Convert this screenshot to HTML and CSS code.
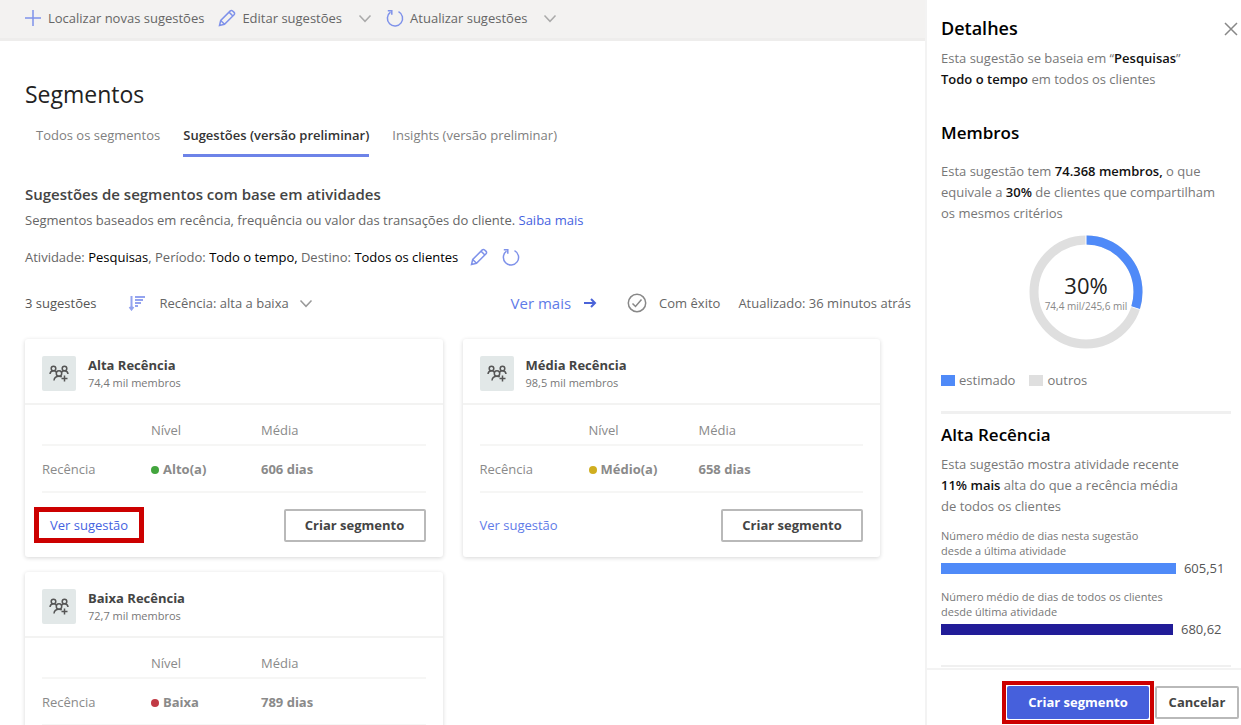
FILE: index.html
```html
<!DOCTYPE html>
<html lang="pt-BR">
<head>
<meta charset="utf-8">
<title>Segmentos</title>
<link rel="stylesheet" href="styles.css">
</head>
<body>
<svg class="defs" aria-hidden="true">
  <symbol id="pencil" viewBox="0 0 18 18"><path d="M1.500 16.500l1.200-5L12.300 1.900a1.600 1.600 0 0 1 2.300 0l1.500 1.500a1.600 1.600 0 0 1 0 2.300L6.500 15.300zM2.700 11.500l3.800 3.800M11.300 3.400l3.300 3.300"/></symbol>
  <symbol id="refresh" viewBox="0 0 18 18"><path d="M12.500 2.600a7.600 7.600 0 1 1-8 .6M1.800 1.800h4v4"/></symbol>
  <symbol id="chevron" viewBox="0 0 14 9"><path d="M1.500 1.500L7 7.300l5.500-5.800"/></symbol>
  <symbol id="people" viewBox="0 0 20 20"><circle cx="4.500" cy="4.500" r="2.300"/><circle cx="15.500" cy="4.500" r="2.300"/><circle cx="10" cy="9.500" r="2.700"/><path d="M1 10c.2-2 1.500-3.300 3.500-3.300 1.400 0 2.300.6 3 1.600M19 10c-.2-2-1.500-3.300-3.500-3.300-1.400 0-2.300.6-3 1.600M5 16.500c.2-2.700 2-4.300 5-4.300 1 0 2 .2 2.700.7M15.500 11.500v6M12.500 14.500h6"/></symbol>
</svg>
<div class="app">
  <main class="main">
    <div class="toolbar">
      <button class="command"><svg class="icon" viewBox="0 0 18 18"><path d="M9 1v16M1 9h16"/></svg>Localizar novas sugestões</button>
      <button class="command"><svg class="icon"><use href="#pencil"/></svg>Editar sugestões<svg class="chevron"><use href="#chevron"/></svg></button>
      <button class="command"><svg class="icon"><use href="#refresh"/></svg>Atualizar sugestões<svg class="chevron"><use href="#chevron"/></svg></button>
    </div>
    <div class="content">
      <h1 class="title">Segmentos</h1>
      <nav class="tabs">
        <a class="tab" href="#">Todos os segmentos</a>
        <a class="tab tab-active" href="#">Sugestões (versão preliminar)</a>
        <a class="tab" href="#">Insights (versão preliminar)</a>
      </nav>
      <h2 class="subtitle">Sugestões de segmentos com base em atividades</h2>
      <p class="description">Segmentos baseados em recência, frequência ou valor das transações do cliente. <a class="link-strong" href="#">Saiba mais</a></p>
      <div class="criteria">
        <span>Atividade: <span class="ink">Pesquisas</span>, Período: <span class="ink">Todo o tempo,</span> Destino: <span class="ink">Todos os clientes</span></span>
        <button class="icon-button" aria-label="Editar"><svg class="icon"><use href="#pencil"/></svg></button>
        <button class="icon-button" aria-label="Atualizar"><svg class="icon"><use href="#refresh"/></svg></button>
      </div>
      <div class="results">
        <span class="count">3 sugestões</span>
        <button class="sort"><svg class="sort-icon" viewBox="0 0 18 16"><path d="M3.500 1v13M1.500 12l2 2.500 2-2.500M7 2h10M7 5h8M7 8h6M7 11h3"/></svg>Recência: alta a baixa<svg class="chevron"><use href="#chevron"/></svg></button>
        <a class="more" href="#">Ver mais<svg class="arrow" viewBox="0 0 14 12"><path d="M1 6h11M8 2l4 4-4 4"/></svg></a>
        <span class="status"><svg class="check" viewBox="0 0 20 20"><circle cx="10" cy="10" r="8.700"/><path d="M5.500 10.500l3 3 6-7"/></svg>Com êxito</span>
        <span class="updated">Atualizado: 36 minutos atrás</span>
      </div>
      <div class="cards">
        <article class="card">
          <header class="card-head"><span class="avatar"><svg class="people"><use href="#people"/></svg></span><div><h3 class="card-title">Alta Recência</h3><p class="card-members">74,4 mil membros</p></div></header>
          <div class="card-body">
            <table class="levels">
              <thead><tr><td></td><th>Nível</th><th>Média</th></tr></thead>
              <tbody><tr><td>Recência</td><td class="value"><span class="dot dot-green"></span>Alto(a)</td><td class="value">606 dias</td></tr></tbody>
            </table>
            <div class="card-actions"><a class="view view-marked" href="#">Ver sugestão</a><button class="button">Criar segmento</button></div>
          </div>
        </article>
        <article class="card">
          <header class="card-head"><span class="avatar"><svg class="people"><use href="#people"/></svg></span><div><h3 class="card-title">Média Recência</h3><p class="card-members">98,5 mil membros</p></div></header>
          <div class="card-body">
            <table class="levels">
              <thead><tr><td></td><th>Nível</th><th>Média</th></tr></thead>
              <tbody><tr><td>Recência</td><td class="value"><span class="dot dot-yellow"></span>Médio(a)</td><td class="value">658 dias</td></tr></tbody>
            </table>
            <div class="card-actions"><a class="view" href="#">Ver sugestão</a><button class="button">Criar segmento</button></div>
          </div>
        </article>
        <article class="card">
          <header class="card-head"><span class="avatar"><svg class="people"><use href="#people"/></svg></span><div><h3 class="card-title">Baixa Recência</h3><p class="card-members">72,7 mil membros</p></div></header>
          <div class="card-body">
            <table class="levels">
              <thead><tr><td></td><th>Nível</th><th>Média</th></tr></thead>
              <tbody><tr><td>Recência</td><td class="value"><span class="dot dot-red"></span>Baixa</td><td class="value">789 dias</td></tr></tbody>
            </table>
          </div>
        </article>
      </div>
    </div>
  </main>
  <aside class="panel">
    <div class="panel-body">
      <header class="panel-head"><h2 class="panel-title">Detalhes</h2><button class="close" aria-label="Fechar"><svg class="close-icon" viewBox="0 0 14 14"><path d="M1 1l12 12M13 1L1 13"/></svg></button></header>
      <p class="panel-text">Esta sugestão se baseia em “<b>Pesquisas</b>”<br><b>Todo o tempo</b> em todos os clientes</p>
      <h3 class="panel-heading members-heading">Membros</h3>
      <p class="panel-text members-text">Esta sugestão tem <b>74.368 membros,</b> o que<br>equivale a <b>30%</b> de clientes que compartilham<br>os mesmos critérios</p>
      <div class="donut">
        <svg class="donut-chart" viewBox="0 0 114 114" aria-hidden="true">
          <circle class="ring" cx="57" cy="57" r="52"/>
          <circle class="ring ring-value" cx="57" cy="57" r="52" pathLength="100" stroke-dasharray="30 70" transform="rotate(-90 57 57)"/>
          <path class="ring-gap" d="M57 0v11M100.700 71.200l11.500 3.700"/>
        </svg>
        <span class="donut-value">30%</span>
        <span class="donut-label">74,4 mil/245,6 mil</span>
      </div>
      <div class="legend"><span class="legend-item"><i class="swatch swatch-blue"></i>estimado</span><span class="legend-item"><i class="swatch"></i>outros</span></div>
      <section class="recency">
        <h3 class="panel-heading">Alta Recência</h3>
        <p class="panel-text recency-text">Esta sugestão mostra atividade recente<br><b>11% mais</b> alta do que a recência média<br>de todos os clientes</p>
        <p class="bar-label">Número médio de dias nesta sugestão<br>desde a última atividade</p>
        <div class="bar-row"><span class="bar" style="width:81%"></span><span>605,51</span></div>
        <p class="bar-label">Número médio de dias de todos os clientes<br>desde última atividade</p>
        <div class="bar-row"><span class="bar bar-navy" style="width:80%"></span><span>680,62</span></div>
      </section>
    </div>
    <footer class="panel-foot"><span class="marked"><button class="button button-primary">Criar segmento</button></span><button class="button button-small">Cancelar</button></footer>
  </aside>
</div>
</body>
</html>
```
FILE: styles.css
```css
* { box-sizing: border-box; }
body { margin: 0; font: 13px/20px "Open Sans", "Noto Sans", sans-serif; color: #666; background: #fff; }
h1, h2, h3, p { margin: 0; font-weight: 600; }
p { font-weight: 400; }
a { text-decoration: none; }
button { font: inherit; color: inherit; background: none; border: 0; padding: 0; white-space: nowrap; }
svg { fill: none; flex: none; }
.defs { position: absolute; width: 0; height: 0; }

.app { display: grid; grid-template-columns: minmax(0, 1fr) 316px; height: 100vh; overflow: hidden; }
.main { min-width: 0; overflow: hidden; }

.toolbar { display: flex; gap: 14px; height: 41px; padding: 0 24px 2px; background: #f3f2f1; border-bottom: 3px solid #eeedec; }
.command { display: flex; align-items: center; gap: 6px; }
.icon { width: 18px; height: 18px; stroke: #7f92ea; stroke-width: 1.5; }
.chevron { width: 14px; height: 9px; margin-left: 10px; stroke: #aaa; stroke-width: 1.5; }

.content { padding: 36px 14px 0 25px; }
.title { font-size: 23px; line-height: 34px; font-weight: 500; color: #222; }
.tabs { display: flex; gap: 23px; padding-left: 11px; margin-top: 14px; }
.tab { padding-bottom: 9px; color: #808080; border-bottom: 3px solid transparent; white-space: nowrap; }
.tab-active { color: #333; font-weight: 600; border-color: #6d83e8; }
.subtitle { margin-top: 26px; font-size: 15px; line-height: 22px; color: #444; }
.description { margin-top: 5px; }
.link-strong { color: #4562df; }
.criteria { display: flex; align-items: center; gap: 12px; margin-top: 17px; white-space: nowrap; }
.ink { color: #000; }
.icon-button { display: flex; margin-right: 2px; }
.results { display: flex; align-items: center; margin-top: 26px; white-space: nowrap; }
.count { color: #555; font-weight: 500; }
.sort { display: flex; align-items: center; margin-left: 32px; }
.sort-icon { width: 18px; height: 16px; margin-right: 13px; stroke: #93a3ef; stroke-width: 2; }
.sort .chevron { stroke: #999; }
.more { display: flex; align-items: center; gap: 12px; margin-left: auto; font-size: 15px; color: #5f7be8; }
.arrow { width: 14px; height: 12px; stroke: #4a63d8; stroke-width: 2; }
.status { display: flex; align-items: center; gap: 12px; margin-left: 30px; font-weight: 500; }
.check { width: 20px; height: 20px; stroke: #888; stroke-width: 1.5; }
.updated { margin-left: 18px; }

.cards { display: grid; grid-template-columns: 1fr 1fr; gap: 15px 20px; margin: 26px 31px 0 0; align-items: start; }
.card { border-radius: 3px; box-shadow: 0 1px 4px rgba(0, 0, 0, .16); }
.card-head { display: flex; gap: 12px; height: 66px; padding: 17px 17px 0; border-bottom: 2px solid #f3f3f2; }
.avatar { display: grid; place-items: center; width: 34px; height: 35px; background: #e2e8e8; border-radius: 2px; }
.people { width: 20px; height: 20px; stroke: #555; stroke-width: 1.5; }
.card-title { font-size: 13px; line-height: 18px; font-weight: 700; color: #444; }
.card-members { font-size: 11px; line-height: 18px; color: #777; }
.card-body { padding: 15px 17px 14px; }
.levels { width: 100%; border-collapse: collapse; table-layout: fixed; color: #8a8a8a; }
.levels td, .levels th { padding: 0; text-align: left; font-weight: 400; }
.levels td:nth-child(1) { width: 109px; }
.levels th:nth-child(2) { width: 110px; }
.levels tr { border-bottom: 2px solid #f6f6f5; }
.levels thead tr { height: 25px; }
.levels thead td, .levels thead th { vertical-align: top; }
.levels tbody tr { height: 47px; }
.levels .value { font-weight: 700; }
.dot { display: inline-block; width: 8px; height: 8px; margin-right: 4px; border-radius: 50%; }
.dot-green { background: #43a53d; }
.dot-yellow { background: #d0ae1f; }
.dot-red { background: #c13a45; }
.card-actions { display: flex; justify-content: space-between; align-items: center; margin-top: 14px; height: 36px; }
.view { color: #5f7be8; }
.view-marked { margin-left: -8px; padding: 3px 11px; border: 5px solid #c00; color: #4562df; }
.button { width: 142px; height: 33px; border: 2px solid #b9b9b9; border-radius: 2px; background: #fff; font-weight: 700; color: #444; }

.panel { display: flex; flex-direction: column; min-height: 0; background: #fff; border-left: 2px solid #f3f3f3; }
.panel-body { flex: 1; min-height: 0; overflow: hidden; padding: 16px 10px 0 14px; color: #777; }
.panel-head { display: flex; justify-content: space-between; align-items: center; margin-right: -7px; }
.panel-title { font-size: 18px; line-height: 25px; color: #000; }
.close { display: flex; }
.close-icon { width: 14px; height: 14px; stroke: #888; stroke-width: 1.5; }
.panel-text { margin-top: 7px; line-height: 21px; white-space: nowrap; }
.panel-text b { font-weight: 600; color: #111; }
.panel-heading { font-size: 17px; line-height: 24px; color: #000; }
.members-heading { margin-top: 31px; }
.members-text { margin-top: 16px; }
.donut { display: grid; grid-template-rows: 1fr auto auto 1fr; justify-items: center; width: 114px; height: 114px; margin: 11px auto 0; white-space: nowrap; }
.donut-chart { grid-area: 1 / 1 / 5 / 2; width: 114px; height: 114px; }
.ring { stroke: #dfdfdf; stroke-width: 9; }
.ring-value { stroke: #4f8af8; }
.ring-gap { stroke: #fff; stroke-width: 1; }
.donut-value { grid-area: 2 / 1; font-size: 22px; line-height: 28px; color: #222; }
.donut-label { grid-area: 3 / 1; font-size: 10px; line-height: 14px; color: #888; }
.legend { display: flex; gap: 14px; margin-top: 21px; }
.legend-item { display: flex; align-items: center; gap: 4px; }
.swatch { width: 14px; height: 11px; background: #dfdfdf; }
.swatch-blue { background: #4f8af8; }
.recency { margin-top: 21px; padding: 9px 0 26px; border-top: 3px solid #f0f0f0; border-bottom: 2px solid #f0f0f0; }
.recency-text { margin-top: 7px; }
.bar-label { margin-top: 11px; font-size: 11px; line-height: 15px; }
.bar-row { display: flex; align-items: center; gap: 8px; height: 20px; color: #555; }
.bar { height: 11px; background: #4f8af8; }
.bar-navy { background: #211c98; }
.panel-foot { display: flex; justify-content: flex-end; align-items: center; gap: 1px; height: 57px; padding: 9px 2px 0 0; border-top: 2px solid #f3f3f3; }
.marked { display: flex; padding: 1px; border: 4px solid #c00; }
.button-primary { border: 0; background: #4660dc; color: #fff; }
.button-small { width: 84px; }
```
